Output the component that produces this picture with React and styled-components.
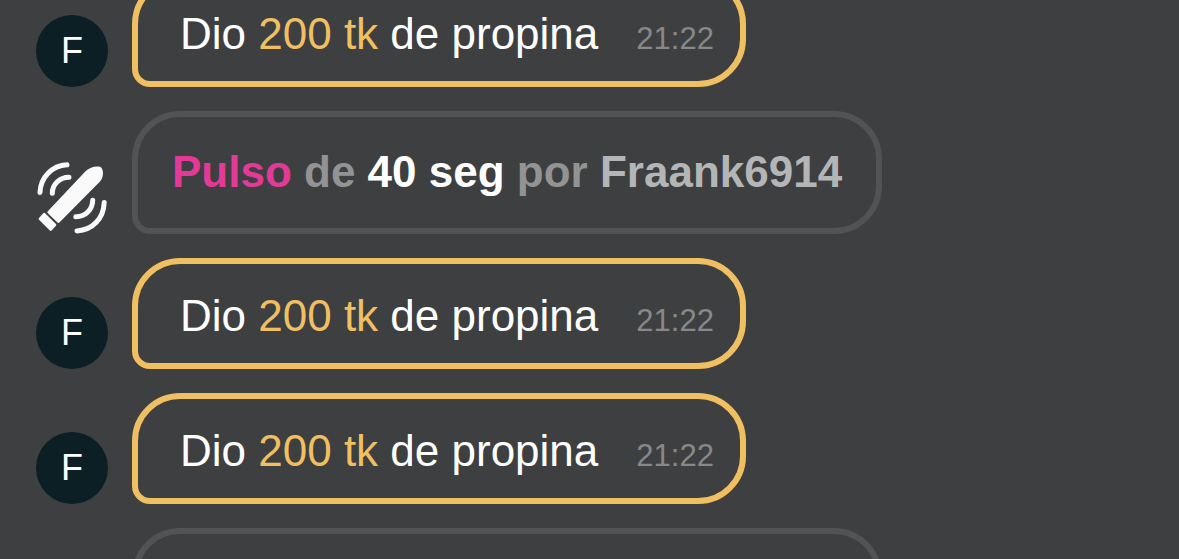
import React from 'react';
import styled, { createGlobalStyle } from 'styled-components';

const GlobalStyle = createGlobalStyle`
  body {
    margin: 0;
    background: #3e3f41;
    font-family: 'Liberation Sans', Arial, sans-serif;
  }
`;

const Chat = styled.main`
  height: 100vh;
  overflow: hidden;
`;

// the list is scrolled a little, so the first message is cut at the top
const MessageList = styled.ul`
  display: flex;
  flex-direction: column;
  gap: 24px;
  margin: -24px 0 0;
  padding: 0 36px;
  list-style: none;
`;

const Message = styled.li`
  display: flex;
  align-items: flex-end;
  gap: 24px;
`;

const Avatar = styled.div`
  display: flex;
  flex-shrink: 0;
  align-items: center;
  justify-content: center;
  width: 72px;
  height: 72px;
  border-radius: 50%;
  background: #0b1f24;
  color: #fff;
  font-size: 36px;
`;

const ToyIcon = styled.svg`
  flex-shrink: 0;
  width: 72px;
  height: 72px;
`;

const Bubble = styled.div`
  border: 6px solid ${({ $tip }) => ($tip ? '#f0bf61' : '#525355')};
  border-radius: 48px 48px 48px 18px;
  padding: ${({ $tip }) => ($tip ? '26px 26px 21px 42px' : '29px 34px 30px')};
  color: ${({ $tip }) => ($tip ? '#fff' : '#929395')};
  font-size: 44px;
  font-weight: ${({ $tip }) => ($tip ? 400 : 700)};
  line-height: 52px;
  white-space: nowrap;
`;

const Amount = styled.span`
  color: #f0bf61;
`;

const Time = styled.time`
  margin-left: 38px;
  color: #87888a;
  font-size: 31px;
  line-height: 36px;
`;

const Pattern = styled.span`
  color: #e23a96;
`;

const Duration = styled.span`
  color: #fff;
`;

const User = styled.span`
  color: #b4b5b7;
`;

const messages = [
  { type: 'tip', initial: 'F', amount: 200, time: '21:22' },
  { type: 'toy', pattern: 'Pulso', seconds: 40, user: 'Fraank6914' },
  { type: 'tip', initial: 'F', amount: 200, time: '21:22' },
  { type: 'tip', initial: 'F', amount: 200, time: '21:22' },
  { type: 'toy', pattern: 'Pulso', seconds: 40, user: 'Fraank6914' },
];

const TipMessage = ({ initial, amount, time }) => (
  <Message>
    <Avatar>{initial}</Avatar>
    <Bubble $tip>
      Dio <Amount>{amount} tk</Amount> de propina
      <Time>{time}</Time>
    </Bubble>
  </Message>
);

const ToyMessage = ({ pattern, seconds, user }) => (
  <Message>
    <ToyIcon viewBox="0 0 72 72" aria-hidden="true">
      <path
        fill="#fafafb"
        d="M11.6 49.4 L49.5 9.2 C53.5 5.2 60.5 3.6 64.6 5 C68.2 8 67.6 15.5 64 19.6 L23.4 60.4 Q22.3 61.4 21.2 60.3 L11.6 50.9 Q10.9 50.1 11.6 49.4 Z"
      />
      <path
        fill="#fafafb"
        d="M8.9 51 L20 62 Q20.7 62.9 20 63.7 L15.6 68.5 Q14.7 69.3 13.8 68.5 L3 57.7 Q2.2 56.9 3 56.1 L7.5 51 Q8.2 50.4 8.9 51 Z"
      />
      <g fill="none" stroke="#fafafb" strokeWidth="5" strokeLinecap="round">
        <path d="M4 30.4 C4.5 15.5 16 3.5 31 2.8" />
        <path d="M16.3 31.2 C16.3 22.5 23.5 15.4 33 15.3" />
        <path d="M68.2 40.6 C67.5 56.5 57 67.8 41 68.9" />
        <path d="M56.7 38.2 C56.5 47.5 49.5 54.8 39.8 54.7" />
      </g>
    </ToyIcon>
    <Bubble>
      <Pattern>{pattern}</Pattern> de <Duration>{seconds} seg</Duration> por{' '}
      <User>{user}</User>
    </Bubble>
  </Message>
);

const App = () => {
  return (
    <>
      <GlobalStyle />
      <Chat>
        <MessageList>
          {messages.map((message, index) =>
            message.type === 'tip' ? (
              <TipMessage key={index} {...message} />
            ) : (
              <ToyMessage key={index} {...message} />
            )
          )}
        </MessageList>
      </Chat>
    </>
  );
};

export default App;
